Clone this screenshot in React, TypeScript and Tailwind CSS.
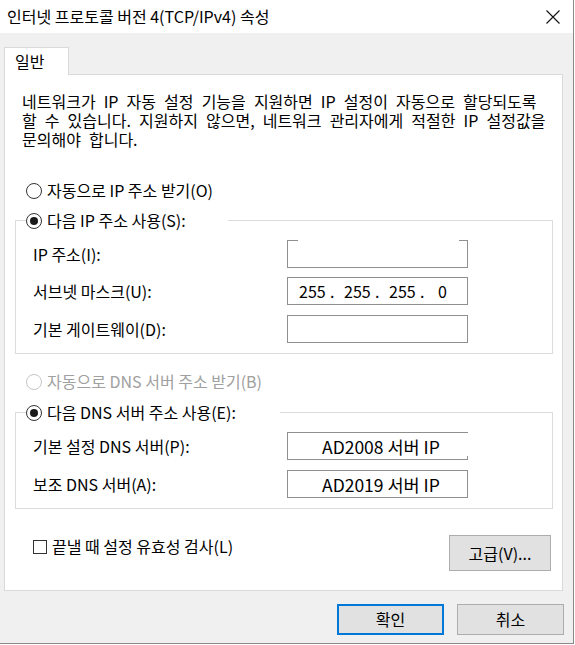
import React from 'react';

function Radio({ checked = false, disabled = false }: { checked?: boolean; disabled?: boolean }) {
  return (
    <span
      className={`w-[16px] h-[16px] rounded-full border bg-white flex items-center justify-center shrink-0 ${
        disabled ? 'border-[#c6c6c6]' : 'border-[#333333]'
      }`}
    >
      {checked && <span className="w-[8px] h-[8px] rounded-full bg-[#1a1a1a]" />}
    </span>
  );
}

function Field({ children, broken }: { children?: React.ReactNode; broken?: 'top' | 'right' }) {
  if (broken === 'top') {
    return (
      <div className="w-[181px] h-[28px] border-x border-b border-[#8f8f8f] flex flex-col">
        <div className="flex justify-between -mx-px">
          <span className="w-[11px] h-px bg-[#8f8f8f]" />
          <span className="w-[9px] h-px bg-[#8f8f8f]" />
        </div>
      </div>
    );
  }
  if (broken === 'right') {
    return (
      <div className="w-[181px] h-[28px] border-y border-l border-[#8f8f8f] flex">
        <div className="flex-1 flex items-center pl-[34px] text-[17.5px]">{children}</div>
        <div className="w-px flex flex-col justify-end">
          <span className="h-[3px] bg-[#8f8f8f]" />
        </div>
      </div>
    );
  }
  return (
    <div className="w-[181px] h-[28px] border border-[#8f8f8f] flex items-center text-[16px]">{children}</div>
  );
}

function FieldRow({ label, children, className = '' }: { label: string; children: React.ReactNode; className?: string }) {
  return (
    <div className={`flex items-center h-[28px] ${className}`}>
      <span className="w-[261px] pl-[7px] whitespace-nowrap">{label}</span>
      {children}
    </div>
  );
}

export default function App() {
  const mask = ['255', '255', '255'];

  return (
    <div className="w-[575px] h-[645px] bg-white font-['Noto_Sans_CJK_KR','Malgun_Gothic',sans-serif] text-[16px] leading-[19px] text-black">
      <div className="w-[574px] h-[644px] border-r border-b border-[#8a8a8a] bg-[#f0f0f0] flex flex-col">
        {/* title bar */}
        <div className="h-[33px] bg-white flex items-center justify-between pl-[7px] pr-[13px] shrink-0">
          <span className="whitespace-nowrap">인터넷 프로토콜 버전 4(TCP/IPv4) 속성</span>
          <svg width="14" height="14" viewBox="0 0 14 14">
            <path d="M0.5 0.5 L13.5 13.5 M13.5 0.5 L0.5 13.5" stroke="#111" strokeWidth="1.1" fill="none" />
          </svg>
        </div>

        <div className="pt-[14px] pl-[4px]">
          <div className="w-[65px] h-[28px] -mb-px relative bg-white border-t border-x border-[#d9d9d9] flex items-center pl-[10px]">
            일반
          </div>

          <div className="w-[559px] h-[517px] bg-white border border-[#d9d9d9] flex flex-col">
            <p className="pt-[17px] pl-[17px] whitespace-nowrap [word-spacing:4.5px]">
              네트워크가 IP 자동 설정 기능을 지원하면 IP 설정이 자동으로 할당되도록
              <br />
              할 수 있습니다. 지원하지 않으면, 네트워크 관리자에게 적절한 IP 설정값을
              <br />
              문의해야 합니다.
            </p>

            <label className="mt-[32px] ml-[21px] flex items-center gap-[5px] h-[19px]">
              <Radio />
              <span>자동으로 IP 주소 받기(O)</span>
            </label>

            <fieldset className="mt-[11px] ml-[10px] w-[538px] border border-[#dcdcdc] pl-[10px] pb-[10px]">
              <legend className="w-[202px] h-[19px] flex items-center gap-[5px] bg-white">
                <Radio checked />
                <span className="whitespace-nowrap">다음 IP 주소 사용(S):</span>
              </legend>
              <FieldRow label="IP 주소(I):" className="mt-[10px]">
                <Field broken="top" />
              </FieldRow>
              <FieldRow label="서브넷 마스크(U):" className="mt-[9px]">
                <Field>
                  <div className="flex pl-[11px] whitespace-pre">
                    {mask.map((m, i) => (
                      <React.Fragment key={i}>
                        <span className="w-[27px]">{m}</span>
                        <span className="w-[18px] pl-[4px]">.</span>
                      </React.Fragment>
                    ))}
                    <span className="w-[27px] pl-[4px]">0</span>
                  </div>
                </Field>
              </FieldRow>
              <FieldRow label="기본 게이트웨이(D):" className="mt-[10px]">
                <Field />
              </FieldRow>
            </fieldset>

            <label className="mt-[18px] ml-[21px] flex items-center gap-[5px] h-[19px] text-[#a0a0a0]">
              <Radio disabled />
              <span>자동으로 DNS 서버 주소 받기(B)</span>
            </label>

            <fieldset className="mt-[12px] ml-[10px] w-[538px] border border-[#dcdcdc] pl-[10px] pb-[10px]">
              <legend className="w-[254px] h-[19px] flex items-center gap-[5px] bg-white">
                <Radio checked />
                <span className="whitespace-nowrap">다음 DNS 서버 주소 사용(E):</span>
              </legend>
              <FieldRow label="기본 설정 DNS 서버(P):" className="mt-[10px]">
                <Field broken="right">AD2008 서버 IP</Field>
              </FieldRow>
              <FieldRow label="보조 DNS 서버(A):" className="mt-[10px]">
                <Field>
                  <span className="pl-[34px] text-[17.5px]">AD2019 서버 IP</span>
                </Field>
              </FieldRow>
            </fieldset>

            <div className="mt-[26px] pl-[28px] pr-[11px] flex justify-between items-start">
              <label className="mt-[2px] flex items-center gap-[5px] h-[19px]">
                <span className="w-[14px] h-[14px] border border-[#333333] bg-white shrink-0" />
                <span>끝낼 때 설정 유효성 검사(L)</span>
              </label>
              <button className="w-[102px] h-[36px] bg-[#e1e1e1] border border-[#adadad] flex items-center justify-center">
                고급(V)...
              </button>
            </div>
          </div>

          <div className="mt-[13px] pr-[9px] flex justify-end gap-[13px]">
            <button className="w-[107px] h-[31px] bg-[#e1e1e1] border-2 border-[#0078d7] flex items-center justify-center">
              확인
            </button>
            <button className="w-[107px] h-[31px] bg-[#e1e1e1] border border-[#adadad] flex items-center justify-center">
              취소
            </button>
          </div>
        </div>
      </div>
    </div>
  );
}
